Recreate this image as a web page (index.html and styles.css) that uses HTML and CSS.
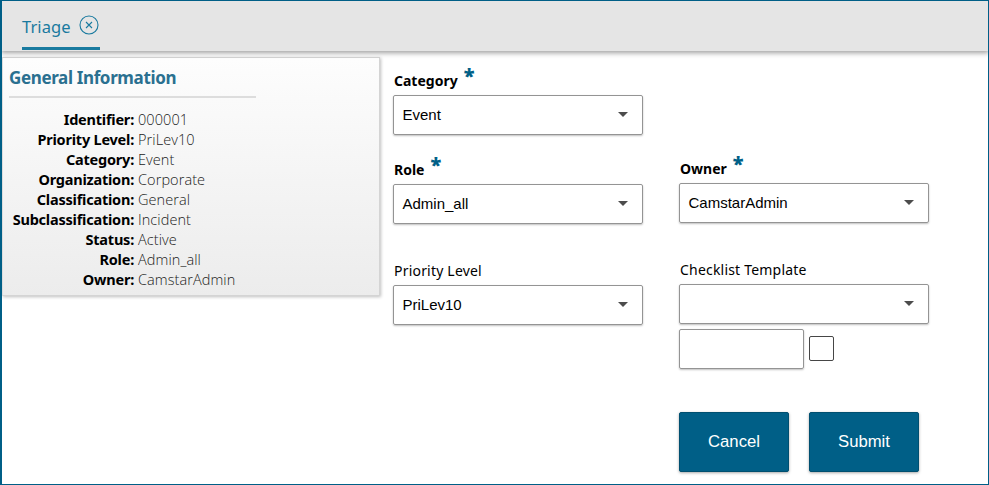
FILE: index.html
```html
<!DOCTYPE html>
<html lang="en">
<head>
<meta charset="utf-8">
<title>Triage</title>
<link rel="stylesheet" href="styles.css">
</head>
<body>
<div class="window">
  <header class="tabs">
    <div class="tab"><span class="tab-name">Triage</span>
      <svg class="close" viewBox="0 0 20 20" width="20" height="20"><circle cx="10" cy="10" r="9"/><path d="M7 7l6 6M13 7l-6 6"/></svg>
    </div>
  </header>
  <main class="content">
    <aside class="panel">
      <h2>General Information</h2>
      <dl>
        <dt>Identifier:</dt><dd>000001</dd>
        <dt>Priority Level:</dt><dd>PriLev10</dd>
        <dt>Category:</dt><dd>Event</dd>
        <dt>Organization:</dt><dd>Corporate</dd>
        <dt>Classification:</dt><dd>General</dd>
        <dt>Subclassification:</dt><dd>Incident</dd>
        <dt>Status:</dt><dd>Active</dd>
        <dt>Role:</dt><dd>Admin_all</dd>
        <dt>Owner:</dt><dd>CamstarAdmin</dd>
      </dl>
    </aside>
    <section class="column first">
      <div class="field category"><label class="required">Category <b>*</b></label>
        <div class="select"><span>Event</span><svg class="arrow" viewBox="0 0 10 5"><path d="M0 0h10L5 5z"/></svg></div></div>
      <div class="field role"><label class="required">Role <b>*</b></label>
        <div class="select"><span>Admin_all</span><svg class="arrow" viewBox="0 0 10 5"><path d="M0 0h10L5 5z"/></svg></div></div>
      <div class="field"><label>Priority Level</label>
        <div class="select"><span>PriLev10</span><svg class="arrow" viewBox="0 0 10 5"><path d="M0 0h10L5 5z"/></svg></div></div>
    </section>
    <section class="column second">
      <div class="field owner"><label class="required">Owner <b>*</b></label>
        <div class="select"><span>CamstarAdmin</span><svg class="arrow" viewBox="0 0 10 5"><path d="M0 0h10L5 5z"/></svg></div></div>
      <div class="field"><label>Checklist Template</label>
        <div class="select"><span></span><svg class="arrow" viewBox="0 0 10 5"><path d="M0 0h10L5 5z"/></svg></div></div>
      <div class="extra"><div class="textbox"></div><div class="checkbox"></div></div>
      <div class="actions"><button>Cancel</button><button>Submit</button></div>
    </section>
  </main>
</div>
</body>
</html>
```
FILE: styles.css
```css
* { box-sizing: border-box; }
body { margin: 0; font-family: "Noto Sans", sans-serif; color: #000; }
.window { width: 989px; height: 485px; border: 1px solid #005f87; border-left-width: 2px; background: #fff; overflow: hidden; }
.tabs { height: 50px; padding: 0 20px; background: #e5e5e5; box-shadow: 0 1px 5px 1px rgba(0,0,0,.38); position: relative; }
.tab { display: flex; width: 78px; height: 49px; border-bottom: 3px solid #197a9f; color: #197a9f; justify-content: space-between; }
.tab-name { font-size: 16.5px; line-height: 51px; letter-spacing: .1px; }
.close { margin: 14px 1px 0 0; fill: none; stroke: #197a9f; stroke-width: 1.1; }
.content { display: flex; height: 433px; }
.panel { width: 378px; height: 239px; margin-top: 6px; padding: 9px 7px; border: 1px solid #d4d4d4; border-left-color: #ddd; background: linear-gradient(#fdfdfd, #ececec); box-shadow: 1px 1px 3px rgba(0,0,0,.25); }
h2 { width: 247px; height: 31px; margin: 0 0 11px -1px; border-bottom: 2px solid #ddd; color: #2a7090; font-size: 17px; line-height: 21px; letter-spacing: -.36px; }
dl { display: grid; grid-template-columns: 124px 1fr; column-gap: 4px; margin: 0; font-size: 14.5px; line-height: 20px; }
dt { font-weight: 700; text-align: right; white-space: nowrap; letter-spacing: -.22px; }
dd { margin: 1px 0 -1px; font-family: "Open Sans", sans-serif; color: #222; font-weight: 300; letter-spacing: .08px; }
.column { width: 250px; }
.first { margin-left: 13px; padding-top: 19px; }
.second { margin-left: 36px; padding-top: 107px; }
label { display: flex; height: 25px; padding-left: 1px; font-size: 14px; line-height: 22px; white-space: nowrap; letter-spacing: .2px; }
.required { font-weight: 700; letter-spacing: 0; }
.required b { margin: -4px 0 0 6px; color: #006087; font-size: 20px; line-height: 20px; }
.select { display: flex; justify-content: space-between; align-items: center; height: 40px; padding: 0 14px 2px 8.5px; border: 1px solid #949494; border-radius: 2px; box-shadow: 0 1px 2px rgba(0,0,0,.25); font: 15px "Liberation Sans", sans-serif; }
.arrow { width: 10px; height: 5px; fill: #4c4c4c; }
.category { margin-bottom: 24px; }
.role { margin-bottom: 36px; }
.owner { margin-bottom: 36px; }
.extra { display: flex; gap: 5px; margin-top: 5px; }
.textbox { width: 125px; height: 40px; border: 1px solid #949494; border-radius: 2px; box-shadow: 0 1px 2px rgba(0,0,0,.25); }
.checkbox { width: 25px; height: 25px; margin-top: 7px; border: 1px solid #464646; border-radius: 2px; }
.actions { display: flex; gap: 20px; margin-top: 43px; }
button { width: 110px; height: 60px; padding: 0; border: 1px solid #004f70; border-radius: 2px; background: #005f87; color: #fff; box-shadow: 0 1px 3px rgba(0,0,0,.35); font: 16.7px "Liberation Sans", sans-serif; }
```
